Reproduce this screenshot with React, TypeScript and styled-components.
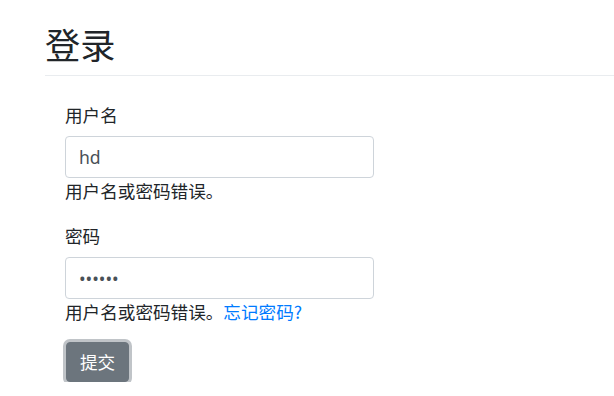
import React from 'react';
import styled, { createGlobalStyle } from 'styled-components';

const GlobalStyle = createGlobalStyle`
  html, body {
    margin: 0;
    padding: 0;
    background: #fff;
  }

  body {
    font-family: "Segoe UI", Roboto, "Noto Sans", "Noto Sans CJK SC", sans-serif;
    font-size: 17.6px;
    line-height: 26.4px;
    color: #212529;
  }
`;

const Page = styled.div`
  padding-left: 45px;
  overflow: hidden;
`;

const Title = styled.h1`
  margin: 23px 0 0;
  padding-bottom: 10px;
  font-size: 35.2px;
  font-weight: 400;
  line-height: 42px;
  border-bottom: 1px solid #e9ecef;
  font-family: "Noto Sans CJK SC", sans-serif;
`;

const Form = styled.form`
  padding: 26px 0 0 20px;
  display: flex;
  flex-direction: column;
  align-items: flex-start;
`;

const Group = styled.div<{ $last?: boolean }>`
  display: flex;
  flex-direction: column;
  margin-bottom: ${(p) => (p.$last ? '16px' : '18px')};
`;

const Label = styled.label`
  font-family: "Noto Sans CJK SC", sans-serif;
  margin-bottom: 8px;
`;

const Input = styled.input`
  box-sizing: border-box;
  width: 309px;
  height: 42px;
  padding: 0 13px;
  font-size: 17.6px;
  font-family: "Segoe UI", "Noto Sans", sans-serif;
  color: #495057;
  border: 1px solid #ced4da;
  border-radius: 4px;
  outline: none;
  background: #fff;
`;

const Feedback = styled.div`
  font-family: "Noto Sans CJK SC", sans-serif;
`;

const Link = styled.a`
  color: #007bff;
  text-decoration: none;
`;

const Button = styled.button`
  margin-left: 1px;
  width: 63px;
  height: 40px;
  padding: 0;
  font-size: 17.6px;
  font-family: "Noto Sans CJK SC", sans-serif;
  color: #fff;
  background: #6c757d;
  border: 1px solid #6c757d;
  border-radius: 4px;
  box-shadow: 0 0 0 3px rgba(130, 138, 145, 0.5);
`;

export default function App (): React.ReactElement {
  return (
    <Page>
      <GlobalStyle />
      <Title>登录</Title>
      <Form onSubmit={(e) => e.preventDefault()}>
        <Group>
          <Label>用户名</Label>
          <Input type='text' defaultValue='hd' />
          <Feedback>用户名或密码错误。</Feedback>
        </Group>
        <Group $last>
          <Label>密码</Label>
          <Input type='password' defaultValue='123456' />
          <Feedback>
            用户名或密码错误。<Link href='#'>忘记密码?</Link>
          </Feedback>
        </Group>
        <Button type='submit'>提交</Button>
      </Form>
    </Page>
  );
}
